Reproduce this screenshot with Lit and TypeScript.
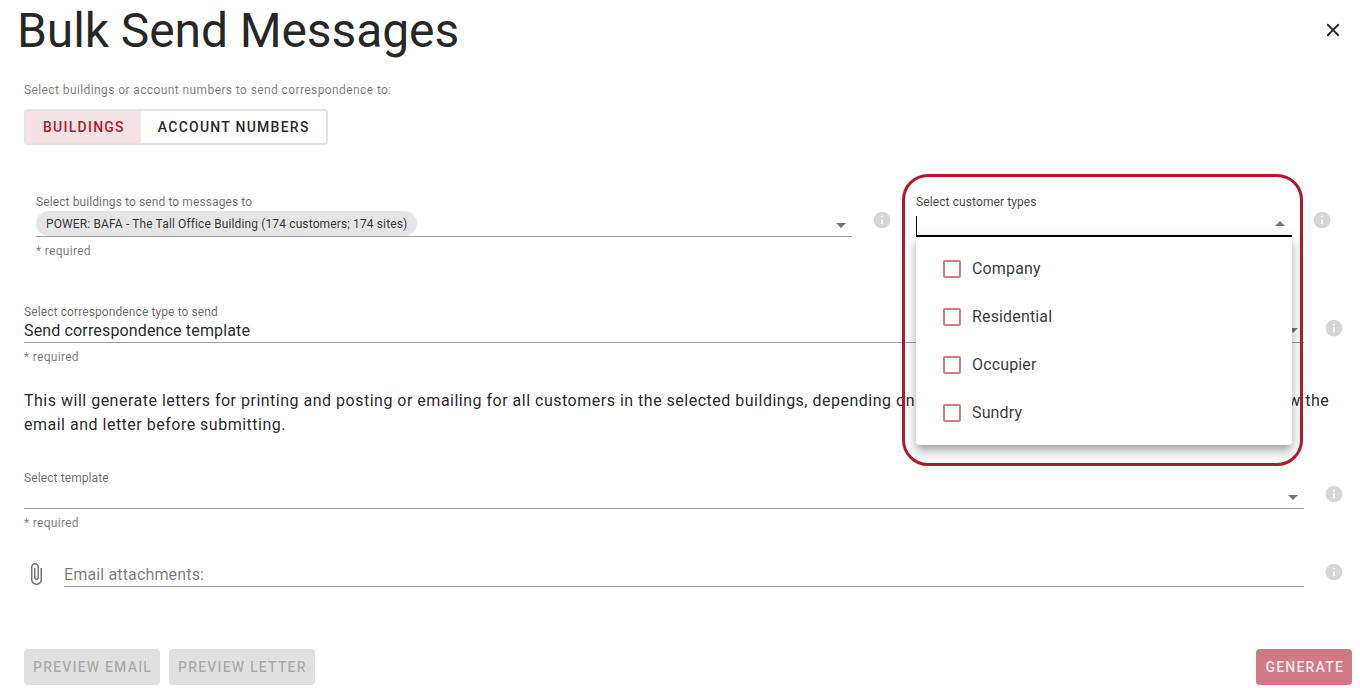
import { LitElement, html, css, svg } from 'lit';
import { customElement } from 'lit/decorators.js';

const infoIcon = html`<svg class="info" viewBox="0 0 24 24"><path d="M12 2C6.48 2 2 6.48 2 12s4.48 10 10 10 10-4.48 10-10S17.52 2 12 2zm1 15h-2v-6h2v6zm0-8h-2V7h2v2z"/></svg>`;

const clip = svg`<path d="M16.5 6v11.5c0 2.21-1.79 4-4 4s-4-1.79-4-4V5c0-1.38 1.12-2.5 2.5-2.5s2.5 1.12 2.5 2.5v10.5c0 .55-.45 1-1 1s-1-.45-1-1V6H10v9.5c0 1.38 1.12 2.5 2.5 2.5s2.5-1.12 2.5-2.5V5c0-2.21-1.79-4-4-4S7 2.79 7 5v12.5c0 3.04 2.46 5.5 5.5 5.5s5.5-2.46 5.5-5.5V6h-1.5z"/>`;

const customerTypes = ['Company', 'Residential', 'Occupier', 'Sundry'];

@customElement('app-root')
export class AppRoot extends LitElement {
  static styles = css`
    :host {
      display: block;
      width: 1360px;
      height: 688px;
      overflow: hidden;
      background: #fff;
      font-family: Roboto, sans-serif;
      color: rgba(0, 0, 0, 0.87);
    }

    .page {
      display: flex;
      flex-direction: column;
      height: 688px;
      padding: 0 8px 3px 24px;
      box-sizing: border-box;
    }

    .header {
      display: flex;
      justify-content: space-between;
      align-items: center;
      height: 62px;
      margin-left: -7px;
    }

    h1 {
      margin: 0;
      font-size: 48px;
      font-weight: 400;
      line-height: 62px;
      letter-spacing: -0.1px;
    }

    .close {
      width: 22px;
      height: 22px;
      margin: 0 8px 2px 0;
      fill: rgba(0, 0, 0, 0.87);
    }

    .hint {
      margin-top: 21px;
      font-size: 12px;
      line-height: 14px;
      letter-spacing: 0.4px;
      color: rgba(0, 0, 0, 0.54);
    }

    .toggle {
      display: inline-flex;
      align-self: flex-start;
      margin-top: 12px;
      height: 36px;
      box-sizing: border-box;
      border: 2px solid #e4e4e4;
      border-radius: 4px;
      overflow: hidden;
    }

    .toggle span {
      display: flex;
      align-items: center;
      padding: 0 16px 0 17px;
      font-size: 14px;
      font-weight: 500;
      letter-spacing: 1.25px;
    }

    .toggle .on {
      background: #f4e2e6;
      color: #ac1a2f;
    }

    .row {
      display: flex;
      align-items: flex-start;
    }

    .buildings {
      margin-top: 50px;
      padding-left: 12px;
      height: 66px;
    }

    .field {
      position: relative;
      display: block;
    }

    .field label {
      display: block;
      font-size: 12px;
      line-height: 14px;
      letter-spacing: 0.1px;
      color: rgba(0, 0, 0, 0.6);
    }

    .control {
      position: relative;
      box-sizing: border-box;
      border-bottom: 1px solid #9e9e9e;
    }

    .arrow {
      position: absolute;
      right: 6px;
      top: 50%;
      width: 0;
      height: 0;
      border-left: 5px solid transparent;
      border-right: 5px solid transparent;
      border-top: 5px solid #757575;
    }

    .required {
      margin-top: 7px;
      font-size: 12px;
      line-height: 14px;
      letter-spacing: 0.3px;
      color: rgba(0, 0, 0, 0.54);
    }

    .info {
      flex: none;
      width: 20px;
      height: 20px;
      margin-left: 20px;
      fill: #d6d6d6;
    }

    .f-building {
      width: 816px;
    }

    .f-building .control {
      height: 28px;
      padding-top: 2px;
    }

    .chip {
      display: inline-flex;
      align-items: center;
      height: 25px;
      padding: 0 10px;
      border-radius: 13px;
      background: #e5e5e5;
      font-size: 12px;
      letter-spacing: 0.13px;
      color: rgba(0, 0, 0, 0.8);
    }

    .buildings .info {
      margin-top: 15px;
    }

    .f-types {
      width: 376px;
      margin-left: 24px;
    }

    .f-types label {
      color: rgba(0, 0, 0, 0.75);
    }

    .f-types .control {
      height: 28px;
      border-bottom: 2px solid #000;
    }

    .f-types .caret {
      position: absolute;
      left: 0;
      top: 7px;
      width: 1px;
      height: 19px;
      background: #000;
    }

    .f-types .arrow {
      right: 7px;
      top: 12px;
      border-top: 0;
      border-bottom: 5px solid #757575;
    }

    .dropdown {
      position: absolute;
      z-index: 2;
      left: 0;
      right: 0;
      top: 42px;
      height: 208px;
      padding: 7px 0;
      box-sizing: border-box;
      background: #fff;
      border-radius: 0 0 4px 4px;
      box-shadow: 0 5px 5px -3px rgba(0, 0, 0, 0.2), 0 8px 10px 1px rgba(0, 0, 0, 0.14), 0 3px 14px 2px rgba(0, 0, 0, 0.12);
    }

    .option {
      display: flex;
      align-items: center;
      gap: 11px;
      height: 48px;
      padding-left: 27px;
      font-size: 16px;
      letter-spacing: 0.15px;
      color: rgba(0, 0, 0, 0.8);
    }

    .box {
      width: 18px;
      height: 18px;
      margin-top: 2px;
      box-sizing: border-box;
      border: 2px solid #d07a88;
      border-radius: 2px;
    }

    .callout {
      position: absolute;
      z-index: 3;
      left: -14px;
      top: -21px;
      width: 401px;
      height: 292px;
      box-sizing: border-box;
      border: 3px solid #ac1a2f;
      border-radius: 26px;
      pointer-events: none;
    }

    .correspondence {
      margin-top: 45px;
      height: 59px;
    }

    .wide {
      width: 1280px;
    }

    .correspondence label {
      line-height: 12px;
    }

    .correspondence .control {
      height: 25px;
      padding-top: 6px;
      font-size: 16px;
      line-height: 14px;
      letter-spacing: 0.15px;
    }

    .correspondence .arrow {
      top: 10px;
    }

    .correspondence .info {
      margin-top: 12px;
    }

    p {
      margin: 24px 0 0;
      width: 1310px;
      font-size: 16px;
      line-height: 24px;
      letter-spacing: 0.5px;
    }

    .template {
      margin-top: 34px;
      height: 59px;
    }

    .template .control {
      height: 24px;
    }

    .template .arrow {
      top: 10px;
    }

    .template .info {
      margin-top: 13px;
    }

    .attach {
      margin-top: 21px;
      height: 36px;
    }

    .clip {
      flex: none;
      width: 24px;
      height: 24px;
      margin: 11px 16px 0 0;
      fill: #757575;
    }

    .attach .input {
      width: 1240px;
      height: 36px;
      box-sizing: border-box;
      padding-top: 13px;
      border-bottom: 1px solid #9e9e9e;
      font-size: 16px;
      line-height: 22px;
      letter-spacing: 0.15px;
      color: rgba(0, 0, 0, 0.54);
    }

    .attach .info {
      margin-top: 11px;
    }

    .actions {
      display: flex;
      gap: 9px;
      margin-top: auto;
    }

    button {
      height: 36px;
      padding: 0 8px 0 9px;
      border: 0;
      border-radius: 4px;
      background: #e0e0e0;
      color: rgba(0, 0, 0, 0.26);
      font: 500 14px Roboto, sans-serif;
      letter-spacing: 1.2px;
    }

    button.generate {
      margin-left: auto;
      background: #d07a88;
      color: rgba(255, 255, 255, 0.85);
    }
  `;

  render() {
    return html`
      <div class="page">
        <div class="header">
          <h1>Bulk Send Messages</h1>
          <svg class="close" viewBox="0 0 24 24"><path d="M19 6.41 17.59 5 12 10.59 6.41 5 5 6.41 10.59 12 5 17.59 6.41 19 12 13.41 17.59 19 19 17.59 13.41 12z"/></svg>
        </div>
        <div class="hint">Select buildings or account numbers to send correspondence to:</div>
        <div class="toggle">
          <span class="on">BUILDINGS</span>
          <span>ACCOUNT NUMBERS</span>
        </div>

        <div class="row buildings">
          <div class="field f-building">
            <label>Select buildings to send to messages to</label>
            <div class="control">
              <span class="chip">POWER: BAFA - The Tall Office Building (174 customers; 174 sites)</span>
              <i class="arrow"></i>
            </div>
            <div class="required">* required</div>
          </div>
          ${infoIcon}
          <div class="field f-types">
            <label>Select customer types</label>
            <div class="control"><i class="caret"></i><i class="arrow"></i></div>
            <div class="dropdown">
              ${customerTypes.map((t) => html`<div class="option"><span class="box"></span>${t}</div>`)}
            </div>
            <div class="callout"></div>
          </div>
          ${infoIcon}
        </div>

        <div class="row correspondence">
          <div class="field wide">
            <label>Select correspondence type to send</label>
            <div class="control">Send correspondence template<i class="arrow"></i></div>
            <div class="required">* required</div>
          </div>
          ${infoIcon}
        </div>

        <p>This will generate letters for printing and posting or emailing for all customers in the selected buildings, depending on their nominated delivery preference. Please review the email and letter before submitting.</p>

        <div class="row template">
          <div class="field wide">
            <label>Select template</label>
            <div class="control"><i class="arrow"></i></div>
            <div class="required">* required</div>
          </div>
          ${infoIcon}
        </div>

        <div class="row attach">
          <svg class="clip" viewBox="0 0 24 24">${clip}</svg>
          <div class="input">Email attachments:</div>
          ${infoIcon}
        </div>

        <div class="actions">
          <button>PREVIEW EMAIL</button>
          <button>PREVIEW LETTER</button>
          <button class="generate">GENERATE</button>
        </div>
      </div>
    `;
  }
}
